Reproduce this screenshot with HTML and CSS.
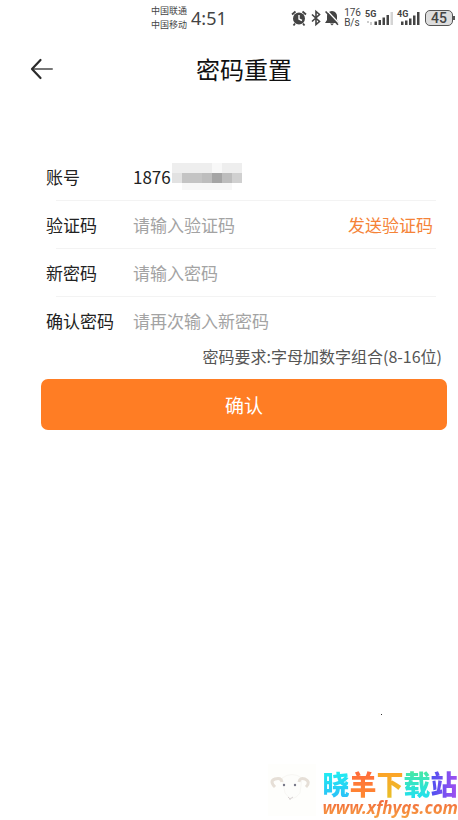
FILE: index.html
```html
<!DOCTYPE html>
<html lang="zh-CN">
<head>
<meta charset="utf-8">
<meta name="viewport" content="width=device-width, initial-scale=1">
<title>密码重置</title>
<link rel="stylesheet" href="styles.css">
</head>
<body>
<div class="status">
  <div class="carriers"><span>中国联通</span><span>中国移动</span></div>
  <time class="clock">4:51</time>
  <div class="indicators">
    <svg width="16" height="18" viewBox="0 0 16 18" aria-hidden="true">
      <circle cx="8" cy="9.500" r="6" fill="#444"/>
      <path d="M1 5.500 4.500 2.500M15 5.500 11.500 2.500M4 14.500 2.500 16.500M12 14.500 13.500 16.500" stroke="#444" stroke-width="1.800" fill="none"/>
      <path d="M8 6v4l3 1.500" stroke="#fff" stroke-width="1.400" fill="none"/>
    </svg>
    <svg class="bluetooth" width="10" height="18" viewBox="0 0 10 18" aria-hidden="true">
      <path d="M1 5.500 8.500 12.500 5 15.500V2.500L8.500 5.500 1 12.500" stroke="#444" stroke-width="1.600" fill="none"/>
    </svg>
    <svg width="14" height="18" viewBox="0 0 14 18" aria-hidden="true">
      <path d="M7 2c-3.400.5-5 2.300-5 5V11L0 14h14L12 11V7c0-2.700-1.600-4.500-5-5zM5 14.500h4L7 16.500z" fill="#444"/>
      <path d="M1.800 1.500 14 14.300" stroke="#fff" stroke-width="1.400"/>
      <path d="M.6 2.500 13 15.800" stroke="#444" stroke-width="1.600"/>
    </svg>
    <div class="speed"><span>176</span><span>B/s</span></div>
    <div class="signal">
      <span class="net">5G</span>
      <svg width="27" height="18" viewBox="0 0 27 18" aria-hidden="true">
        <path d="M1 12h2v2H1zM4 13h2v3H4z" fill="#ccc"/>
        <path d="M8.500 12.500h2.500V16H8.500zM12.500 11h2.500v5h-2.500zM16.500 8.500H19V16h-2.500zM20.500 6H23v10h-2.500z" fill="#444"/>
        <path d="M24.500 3H27v13h-2.500z" fill="#d4d4d4"/>
      </svg>
    </div>
    <div class="signal">
      <span class="net">4G</span>
      <svg width="22" height="18" viewBox="0 0 22 18" aria-hidden="true">
        <path d="M3 12.500h2.500V16H3zM7 11.500h2.500V16H7zM11 9.500h2.500V16H11zM15 6.500h2.500V16H15zM19 3h2.500v13H19z" fill="#444"/>
      </svg>
    </div>
    <div class="battery">45</div>
  </div>
</div>

<header class="header">
  <button class="back" type="button" aria-label="返回">
    <svg width="24" height="22" viewBox="0 0 24 22" aria-hidden="true">
      <path d="M3 11H22" stroke="#777" stroke-width="2" stroke-linecap="round"/>
      <path d="M10.500 2 2 11l8.500 9" stroke="#2b2b2b" stroke-width="2.200" fill="none" stroke-linecap="round" stroke-linejoin="round"/>
    </svg>
  </button>
  <h1>密码重置</h1>
</header>

<main>
  <form class="form">
    <div class="row">
      <label for="account">账号</label>
      <input class="account" id="account" type="text" value="1876" readonly>
      <svg class="mosaic" width="70" height="28" viewBox="0 0 70 28" aria-hidden="true" shape-rendering="crispEdges">
        <path d="M0 0h70v10H0z" fill="#eee"/><path d="M40 0h10v10H40z" fill="#f8f8f8"/>
        <path d="M0 10h10v10H0z" fill="#e2e2e2"/><path d="M10 10h30v10H10z" fill="#c4c4c4"/>
        <path d="M30 10h10v10H30z" fill="#bdbdbd"/><path d="M40 10h10v10H40z" fill="#a5a5a5"/>
        <path d="M50 10h10v10H50z" fill="#bdbdbd"/><path d="M60 10h10v10H60z" fill="#d0d0d0"/>
        <path d="M10 20h50v7H10z" fill="#f7f7f7"/>
      </svg>
    </div>
    <hr>
    <div class="row">
      <label for="code">验证码</label>
      <input id="code" type="text" placeholder="请输入验证码">
      <button class="send" type="button">发送验证码</button>
    </div>
    <hr>
    <div class="row">
      <label for="pwd">新密码</label>
      <input id="pwd" type="password" placeholder="请输入密码">
    </div>
    <hr>
    <div class="row">
      <label for="pwd2">确认密码</label>
      <input id="pwd2" type="password" placeholder="请再次输入新密码">
    </div>
    <p class="hint">密码要求:字母加数字组合(8-16位)</p>
    <button class="submit" type="submit">确认</button>
  </form>
</main>

<div class="speck"></div>

<footer class="brand">
  <svg class="sheep" width="48" height="52" viewBox="0 0 48 52" aria-hidden="true">
    <path d="M0 0h48v52H0z" fill="#fefefc"/>
    <path d="M14 14Q24 7 34 14L32 29Q24 40 17 29z" fill="#fdfdfb" stroke="#f8f7f4"/>
    <path d="M7 23Q1 17 7 15Q13 13 14 18" stroke="#e6dfd7" stroke-width="3" fill="none"/>
    <path d="M31 18Q32 13 37 15Q43 18 38 23" stroke="#e6dfd7" stroke-width="3" fill="none"/>
    <circle cx="16" cy="21" r="1.200" fill="#778"/><circle cx="27" cy="21" r="1.200" fill="#778"/>
    <path d="M20 33l2 2 3-2M22 35v1" stroke="#d8d2d2" fill="none"/>
  </svg>
  <div class="brand-text">
    <strong class="brand-name"><span class="c1">晓</span><span class="c2">羊</span><span class="c3">下</span><span class="c4">载</span><span class="c5">站</span></strong>
    <span class="brand-url">www.xfhygs.com</span>
  </div>
</footer>
</body>
</html>
```

FILE: styles.css
```css
* { box-sizing: border-box; }

body {
  margin: 0;
  min-height: 100vh;
  display: flex;
  flex-direction: column;
  background: #fff;
  color: #222;
  font-family: "Noto Sans CJK SC", "Noto Sans", sans-serif;
}

button, input {
  font: inherit;
  border: 0;
  padding: 0;
  background: none;
}

button { cursor: pointer; }

.status {
  display: flex;
  align-items: center;
  height: 36px;
  padding: 0 5px 0 151px;
  color: #444;
}

.carriers, .speed {
  display: flex;
  flex-direction: column;
}

.carriers {
  font-size: 9px;
  line-height: 14px;
}

.clock {
  margin-left: 4px;
  font-family: "Noto Sans", sans-serif;
  font-size: 18px;
}

.indicators {
  display: flex;
  align-items: center;
  margin-left: auto;
}

.bluetooth { margin: 0 4px; }

.speed {
  margin-left: 5px;
  font-family: Roboto, sans-serif;
  font-size: 10px;
  line-height: 10px;
}

.signal {
  position: relative;
  display: flex;
  margin-left: 5px;
}

.net {
  position: absolute;
  top: 0;
  left: -1px;
  font: bold 9px/10px Roboto, sans-serif;
}

.battery {
  position: relative;
  width: 28px;
  margin-left: 5px;
  border: 1px solid #555;
  border-radius: 5px;
  background: #ddd;
  font: 500 14px/14px Roboto, sans-serif;
  text-align: center;
}

.battery::after {
  content: "";
  position: absolute;
  top: 5px;
  right: -3px;
  width: 2px;
  height: 4px;
  background: #555;
}

.header {
  display: grid;
  grid-template-columns: 60px 1fr 60px;
  align-items: center;
  height: 66px;
}

.back {
  display: flex;
  padding-left: 30px;
}

h1 {
  margin: 0;
  padding-left: 30px;
  color: #111;
  font-size: 24px;
  font-weight: 400;
  line-height: 32px;
  text-align: center;
}

.form {
  padding: 51px 11px 0 41px;
  font-size: 17px;
}

.row {
  display: flex;
  align-items: center;
  height: 47px;
  padding: 0 14px 0 5px;
}

.row label {
  flex: none;
  width: 87px;
}

.row input {
  flex: 1;
  min-width: 0;
  color: #222;
  outline: 0;
}

.row .account {
  flex: none;
  width: 39px;
}

input::placeholder {
  color: #a3a3a3;
  opacity: 1;
}

.row .send {
  color: #f58337;
}

hr {
  height: 1px;
  margin: 0 11px 0 15px;
  border: 0;
  background: #f3f3f3;
}

.hint {
  margin: 0;
  padding-right: 5px;
  color: #555;
  font-size: 16px;
  line-height: 25px;
  text-align: right;
}

.submit {
  display: block;
  width: 100%;
  height: 51px;
  margin-top: 10px;
  border-radius: 7px;
  background: #ff7d24;
  color: #fff;
  font-size: 19px;
}

.speck {
  align-self: flex-end;
  width: 1px;
  height: 1px;
  margin: auto 76px 45px 0;
  background: #333;
}

.brand {
  display: flex;
  align-items: center;
  justify-content: flex-end;
  height: 60px;
}

.brand-text {
  display: flex;
  flex-direction: column;
  margin-left: 6px;
  padding-top: 8px;
}

.brand-name {
  display: flex;
  font-size: 27px;
  font-weight: 900;
  line-height: 28px;
}

.brand-name span, .brand-url {
  background-clip: text;
  color: transparent;
}

.brand-name .c1 { background-image: linear-gradient(#20f0f0, #2ac0f8); }
.brand-name .c2 { background-image: linear-gradient(#ff6a3d, #ff8a30); }
.brand-name .c3 { background-image: linear-gradient(#ffa028, #e8c028); }
.brand-name .c4 { background-image: linear-gradient(#48e8a0, #20e0f0); }
.brand-name .c5 { background-image: linear-gradient(90deg, #4a50f0, #a050f0); }

.brand-url {
  background-image: linear-gradient(#f0603c, #f8a040);
  font-family: "Noto Sans", sans-serif;
  font-size: 17px;
  font-style: italic;
  font-weight: 700;
  line-height: 20px;
}
```
